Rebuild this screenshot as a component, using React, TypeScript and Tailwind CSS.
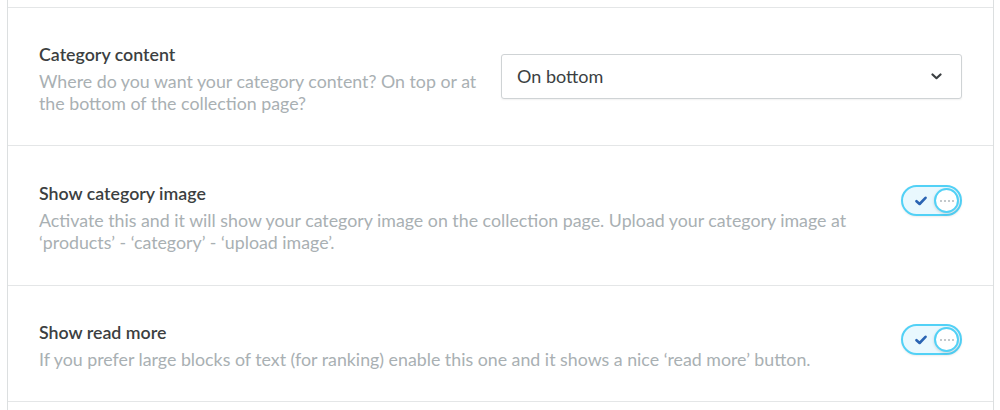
import React from 'react';

const font = { fontFamily: 'Lato, "Open Sans", sans-serif' };

const Toggle: React.FC = () => (
  <div className="relative mt-[3px] w-[61px] h-[31px] shrink-0 rounded-full border-2 border-[#52d1f6] bg-[#e9f8fe] shadow-[0_1px_2px_rgba(0,0,0,0.08)]">
    <svg className="absolute left-[12px] top-[9px]" width="12" height="10" viewBox="0 0 12 10">
      <path d="M1.5 5.2 L4.6 8 L10.5 1.8" fill="none" stroke="#2a64b3" strokeWidth="2.6" strokeLinecap="round" strokeLinejoin="round" />
    </svg>
    <div className="absolute right-[1px] top-[1px] w-[25px] h-[25px] rounded-full bg-white border-2 border-[#52d1f6] shadow-[0_1px_3px_rgba(0,0,0,0.15)] flex items-center justify-center gap-[2px]">
      <span className="w-[2px] h-[2px] bg-[#c4c9cc]" />
      <span className="w-[2px] h-[2px] bg-[#c4c9cc]" />
      <span className="w-[2px] h-[2px] bg-[#c4c9cc]" />
      <span className="w-[2px] h-[2px] bg-[#c4c9cc]" />
    </div>
  </div>
);

const Select: React.FC = () => (
  <div className="w-[461px] h-[45px] shrink-0 flex items-center justify-between pl-[15px] pr-[16px] rounded-[3px] border border-[#cfd3d5] bg-white shadow-[0_1px_2px_rgba(0,0,0,0.06)]">
    <span className="text-[18px] text-[#3b3f42]">On bottom</span>
    <svg width="11" height="7" viewBox="0 0 11 7" className="mr-[3px]">
      <path d="M1.5 1.5 L5.5 5.2 L9.5 1.5" fill="none" stroke="#3b3f42" strokeWidth="2.2" strokeLinecap="round" strokeLinejoin="round" />
    </svg>
  </div>
);

interface RowProps {
  title: string;
  text: string;
  control: React.ReactNode;
  textClass: string;
  rowClass: string;
}

const Row: React.FC<RowProps> = ({ title, text, control, textClass, rowClass }) => (
  <div className={`flex justify-between px-[31px] border-b border-[#e4e6e7] ${rowClass}`}>
    <div className={textClass}>
      <div className="text-[17.8px] leading-[22px] font-semibold text-[#3c3f41]">{title}</div>
      <div className="mt-[5px] text-[17.8px] leading-[22px] text-[#a9b0b3]">{text}</div>
    </div>
    {control}
  </div>
);

export default function App() {
  return (
    <div className="w-[1000px] h-[410px] bg-white overflow-hidden" style={font}>
      <div className="ml-[7px] w-[987px] h-[420px] border-x border-[#dcdfe0]">
        <div className="h-[8px] border-b border-[#e4e6e7]" />
        <Row
          title="Category content"
          text="Where do you want your category content? On top or at the bottom of the collection page?"
          control={<div className="self-center -mt-[4px]"><Select /></div>}
          textClass="w-[446px]"
          rowClass="items-start pt-[35px] pb-[31px]"
        />
        <Row
          title="Show category image"
          text="Activate this and it will show your category image on the collection page. Upload your category image at ‘products’ - ‘category’ - ‘upload image’."
          control={<Toggle />}
          textClass="w-[820px]"
          rowClass="items-start pt-[36px] pb-[32px]"
        />
        <Row
          title="Show read more"
          text="If you prefer large blocks of text (for ranking) enable this one and it shows a nice ‘read more’ button."
          control={<Toggle />}
          textClass="w-[820px]"
          rowClass="items-start pt-[35px] pb-[31px]"
        />
      </div>
    </div>
  );
}
